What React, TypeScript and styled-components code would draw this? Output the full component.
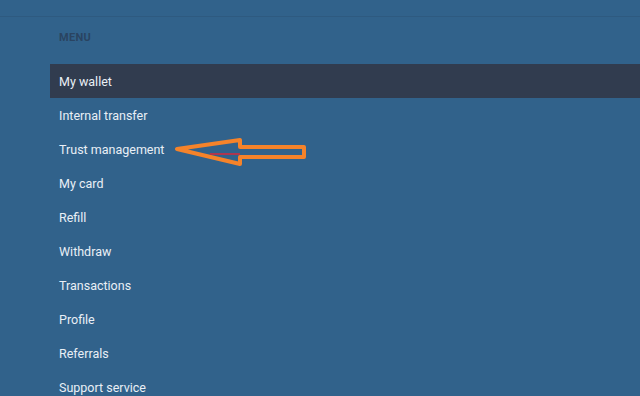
import React from 'react';
import styled, { createGlobalStyle } from 'styled-components';

const GlobalStyle = createGlobalStyle`
  html, body {
    margin: 0;
    padding: 0;
    background: #31628b;
  }
  body {
    font-family: Roboto, "Liberation Sans", Arial, sans-serif;
    overflow: hidden;
  }
`;

const Page = styled.div`
  width: 640px;
  height: 396px;
  background: #31628b;
  overflow: hidden;
`;

const TopBar = styled.div`
  height: 16px;
  border-bottom: 1px solid #2e5a80;
`;

const Sidebar = styled.nav`
  position: relative;
  margin-left: 50px;
  padding-top: 13px;
`;

const MenuTitle = styled.div`
  padding-left: 9px;
  height: 34px;
  font-size: 11px;
  font-weight: 700;
  color: #2a4461;
  letter-spacing: 0.3px;
  line-height: 16px;
`;

const MenuList = styled.ul`
  list-style: none;
  margin: 0;
  padding: 0;
`;

const MenuItem = styled.li<{ $active?: boolean }>`
  height: 34px;
  display: flex;
  align-items: center;
  padding-left: 9px;
  font-size: 12.5px;
  color: #e9eff6;
  background: ${(p) => (p.$active ? '#313c4f' : 'transparent')};
`;

const Arrow = styled.svg`
  position: absolute;
  left: 124px;
  top: 118px;
  overflow: visible;
`;

const items = [
  'My wallet',
  'Internal transfer',
  'Trust management',
  'My card',
  'Refill',
  'Withdraw',
  'Transactions',
  'Profile',
  'Referrals',
  'Support service',
];

export default function App() {
  return (
    <Page>
      <GlobalStyle />
      <TopBar />
      <Sidebar>
        <MenuTitle>MENU</MenuTitle>
        <MenuList>
          {items.map((label, i) => (
            <MenuItem key={label} $active={i === 0}>
              {label}
            </MenuItem>
          ))}
        </MenuList>
        {/* annotation arrow pointing at "Trust management" */}
        <Arrow width="140" height="44" viewBox="0 0 140 44">
          <path
            d="M3 14 L66 5 L66 12 L130 12 L130 22 L66 22 L66 29 Z"
            fill="none"
            stroke="#f5832a"
            strokeWidth="4"
            strokeLinejoin="round"
          />
          <line x1="36" y1="19" x2="66" y2="19" stroke="#d8283a" strokeWidth="1.5" />
        </Arrow>
      </Sidebar>
    </Page>
  );
}
